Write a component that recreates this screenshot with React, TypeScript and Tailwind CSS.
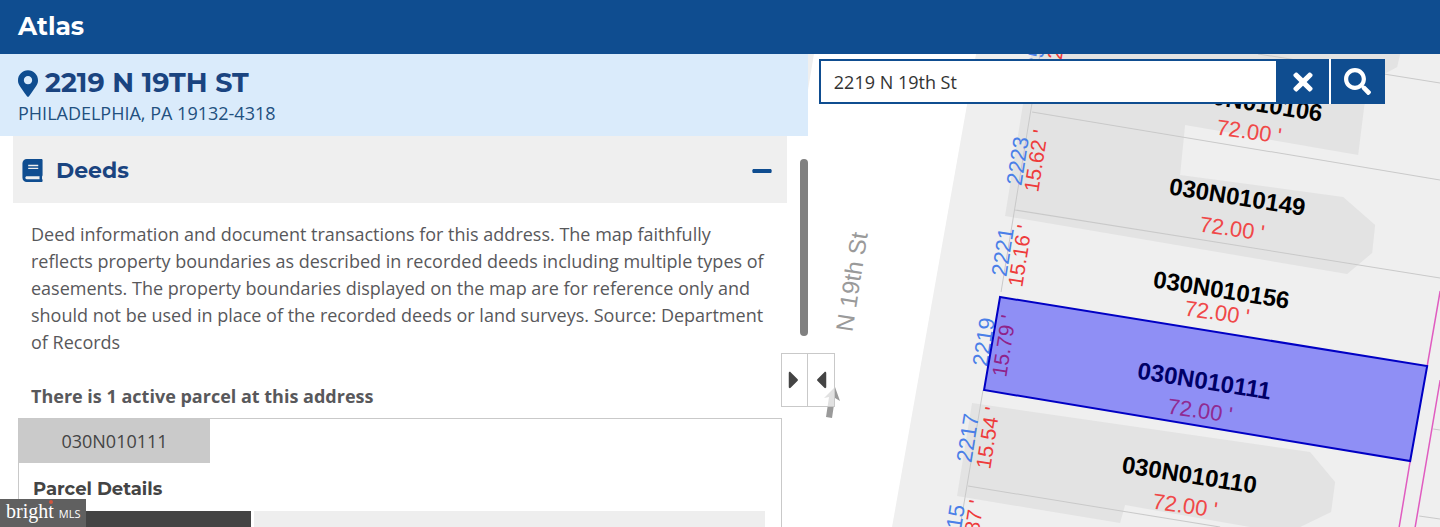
import { useState } from "react";
import { FaBook, FaCaretLeft, FaCaretRight, FaMapMarkerAlt, FaMinus, FaSearch, FaTimes } from "react-icons/fa";

type Label = { text: string; x: number; y: number };

const parcels: Label[] = [
  { text: "030N010106", x: 1253, y: 111 },
  { text: "030N010149", x: 1236, y: 205 },
  { text: "030N010156", x: 1220, y: 298 },
  { text: "030N010111", x: 1203, y: 389 },
  { text: "030N010110", x: 1188, y: 483 },
];

const depths: Label[] = [
  { text: "72.00 '", x: 1248, y: 139 },
  { text: "72.00 '", x: 1231, y: 236 },
  { text: "72.00 '", x: 1216, y: 320 },
  { text: "72.00 '", x: 1199, y: 418 },
  { text: "72.00 '", x: 1184, y: 513 },
];

const houses: Label[] = [
  { text: "2225", x: 1041, y: 71 },
  { text: "2223", x: 1025, y: 162 },
  { text: "2221", x: 1010, y: 253 },
  { text: "2219", x: 991, y: 343 },
  { text: "2217", x: 975, y: 439 },
  { text: "2215", x: 961, y: 530 },
];

const frontages: Label[] = [
  { text: "15.62 '", x: 1060, y: 70 },
  { text: "15.62 '", x: 1043, y: 162 },
  { text: "15.16 '", x: 1027, y: 257 },
  { text: "15.79 '", x: 1011, y: 347 },
  { text: "15.54 '", x: 995, y: 439 },
  { text: "15.87 '", x: 979, y: 532 },
];

function Labels({ items, angle, className }: { items: Label[]; angle: number; className: string }) {
  return (
    <g className={className} textAnchor="middle">
      {items.map((l) => (
        <text key={`${l.x}-${l.y}`} transform={`translate(${l.x} ${l.y}) rotate(${angle})`}>
          {l.text}
        </text>
      ))}
    </g>
  );
}

function ParcelMap() {
  return (
    <svg
      className="absolute inset-0 h-full w-full font-['Liberation_Sans',Arial,sans-serif]"
      viewBox="808 54 632 473"
      preserveAspectRatio="xMidYMid slice"
      role="img"
      aria-label="Parcel map"
    >
      <rect x="808" y="54" width="632" height="473" fill="#ffffff" />
      <path d="M808 54h6l-6 36z" fill="#efefef" />
      <path d="M976 54H1440V527H892z" fill="#efefef" />
      <g fill="#e3e3e3">
        <path d="M1031 54H1373L1364 107 1358 155 1185 125 1180 175 1343 197 1375 225 1372 253 1347 274 1005 216z" />
        <path d="M1300 54H1400L1397 67 1386 73z" />
        <path d="M972 403L1310 452 1335 482 1331 512 1300 527H1250L1125 505 1120 523 957 496z" />
      </g>
      <g fill="none" stroke="#c9c9c9" strokeWidth="1">
        <path d="M1040 54L1001 292M983 390L960 527" />
        <path d="M1032 112L1440 180M1015 210L1440 278M968 486L1220 527M1258 54L1440 83" />
        <path d="M1433 429L1440 430M1419 516L1440 519" />
      </g>
      <g fill="none" stroke="#e05cc0" strokeWidth="1.5">
        <path d="M1440 291L1427 366M1410 461L1399 527M1440 380L1415 527" />
      </g>
      <Labels items={houses} angle={-81} className="fill-[#4a7fe8] text-[22px]" />
      <Labels items={frontages} angle={-81} className="fill-[#ee3b3b] text-[21px]" />
      <Labels items={depths} angle={8} className="fill-[#f04848] text-[22px]" />
      <Labels items={parcels} angle={9} className="fill-black text-[24px] font-bold" />
      <Labels items={[{ text: "N 19th St", x: 860, y: 283 }]} angle={-81} className="fill-[#9a9a9a] text-[24px]" />
      <path d="M835 387L840 401 835 398 832 418 826 417 829 397 824 398z" fill="#9a9a9a" />
      <path d="M1000 297L1427 366 1410 461 984 390z" fill="#0000ff" fillOpacity="0.4" stroke="#0000c4" strokeWidth="2" />
    </svg>
  );
}

function SearchBar() {
  const [query, setQuery] = useState("2219 N 19th St");
  return (
    <form
      className="absolute top-[5px] right-[55px] left-[11px] flex h-[45px] border-2 border-[#0f4d90] bg-[#0f4d90]"
      onSubmit={(e) => e.preventDefault()}
    >
      <input
        aria-label="Search for an address"
        className="min-w-0 flex-1 bg-white px-[13px] text-lg text-[#333333] outline-none"
        value={query}
        onChange={(e) => setQuery(e.target.value)}
      />
      <button type="button" aria-label="Clear" className="flex w-[53px] items-center justify-center text-white" onClick={() => setQuery("")}>
        <FaTimes size={28} />
      </button>
      <button type="submit" aria-label="Search" className="-my-[2px] flex w-[54px] items-center justify-center border-l-2 border-white text-white">
        <FaSearch size={27} />
      </button>
    </form>
  );
}

function DeedsPanel() {
  return (
    <div className="min-w-0 flex-1">
      <button type="button" aria-expanded="true" className="flex h-[67px] w-full items-center bg-[#efefef] pt-[2px] pr-[14px] pl-2 text-[#0f4d90]">
        <FaBook size={23} />
        <span className="ml-3 font-[Montserrat,Inter,sans-serif] text-[22px] font-bold text-[#1a4480]">Deeds</span>
        <FaMinus size={22} className="ml-auto" />
      </button>
      <div className="mt-[18px] pr-5 pl-[18px] text-lg leading-[27px] text-[#58585b]">
        <p>
          Deed information and document transactions for this address. The map faithfully reflects property boundaries as
          described in recorded deeds including multiple types of easements. The property boundaries displayed on the map are
          for reference only and should not be used in place of the recorded deeds or land surveys. Source: Department of
          Records
        </p>
        <p className="mt-[27px] font-bold">There is 1 active parcel at this address</p>
      </div>
      <section className="mt-2 mr-[5px] ml-[5px] border border-[#c9c9c9] text-[#444444]">
        <button type="button" className="h-11 w-[191px] bg-[#cacaca] text-lg">
          030N010111
        </button>
        <h3 className="mt-[14px] ml-[14px] font-[Montserrat,Inter,sans-serif] text-lg leading-6 font-bold">Parcel Details</h3>
        <div className="mt-[10px] pr-4 pl-[14px]">
          <table className="w-full">
            <tbody>
              <tr className="h-12">
                <td className="w-[30%] border-r-[3px] border-white bg-[#444444]" />
                <td className="bg-[#eeeeee]" />
              </tr>
            </tbody>
          </table>
        </div>
      </section>
    </div>
  );
}

export default function App() {
  return (
    <div className="flex h-screen flex-col overflow-hidden bg-white font-['Open_Sans',sans-serif]">
      <header className="flex h-[54px] shrink-0 items-center bg-[#0f4d90] px-[18px]">
        <h1 className="font-[Montserrat,Inter,sans-serif] text-[25px] font-bold text-white">Atlas</h1>
      </header>
      <main className="relative flex min-h-0 flex-1">
        <div className="relative flex w-[56.1%] shrink-0 flex-col overflow-hidden">
          <div className="h-[82px] shrink-0 bg-[#daebfb] px-[18px] pt-[13px] text-[#0f4d90]">
            <div className="flex h-8 items-center gap-[7px]">
              <FaMapMarkerAlt className="h-[27px] w-5" />
              <h2 className="font-[Montserrat,Inter,sans-serif] text-[27px] leading-8 font-bold text-[#1a4480]">2219 N 19TH ST</h2>
            </div>
            <p className="text-lg leading-7 text-[#22507f]">PHILADELPHIA, PA 19132-4318</p>
          </div>
          <div className="flex min-h-0 flex-1 overflow-hidden pl-[13px]">
            <DeedsPanel />
            <div className="ml-[13px] pt-[23px]">
              <div className="h-[177px] w-2 rounded-full bg-[#808080]" />
            </div>
          </div>
        </div>
        <div className="relative min-w-0 flex-1 overflow-hidden">
          <ParcelMap />
          <SearchBar />
        </div>
        <div className="absolute top-[299px] left-[56.1%] -ml-[27px] grid h-[54px] w-[54px] grid-cols-2 border border-[#c9c9c9] bg-white/70 text-[#444444]">
          <button type="button" aria-label="Expand details" className="flex min-w-0 items-center justify-center border-r border-[#c9c9c9]">
            <FaCaretRight size={28} className="shrink-0" />
          </button>
          <button type="button" aria-label="Expand map" className="flex min-w-0 items-center justify-center">
            <FaCaretLeft size={28} className="shrink-0" />
          </button>
        </div>
        <div className="absolute bottom-0 left-0 flex h-7 w-[86px] items-baseline gap-[5px] bg-[#606060] pl-[6px] text-white">
          <span className="font-['Liberation_Serif',serif] text-xl leading-6">
            brigh<span className="relative">t<span className="absolute top-0 left-px h-1 w-1 rounded-full bg-[#d0563f]" /></span>
          </span>
          <span className="text-[11px] leading-4">MLS</span>
        </div>
      </main>
    </div>
  );
}
